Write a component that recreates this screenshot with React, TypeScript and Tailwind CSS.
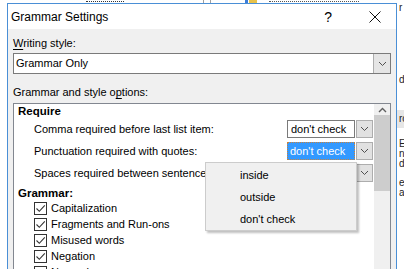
import React from "react";

const FONT = "font-[family-name:'Liberation_Sans',Arial,sans-serif]";

function ChevronDown() {
  return (
    <svg width="9" height="6" viewBox="0 0 9 6" className="block">
      <path d="M1 1 L4.5 4.5 L8 1" fill="none" stroke="#505050" strokeWidth="1" />
    </svg>
  );
}

function Check() {
  return (
    <svg width="11" height="11" viewBox="0 0 11 11" className="block">
      <path d="M1.5 5.5 L4.3 8.3 L9.8 2.3" fill="none" stroke="#333" strokeWidth="1.1" />
    </svg>
  );
}

function Dropdown({ value, focused }: { value: string; focused?: boolean }) {
  return (
    <div className="flex h-[18px] w-[86px] shrink-0">
      {focused ? (
        <div className="flex-1 bg-[#3399ff] border border-dotted border-[#c8823c] flex items-center pl-[2px] text-white leading-none">
          {value}
        </div>
      ) : (
        <div className="flex-1 bg-white border border-[#7a7a7a] flex items-center pl-[3px] text-black leading-none">
          {value}
        </div>
      )}
      <div className="w-[17px] ml-px bg-[#e1e1e1] border border-[#adadad] flex items-center justify-center">
        <ChevronDown />
      </div>
    </div>
  );
}

function SettingRow({ label, value, focused }: { label: string; value: string; focused?: boolean }) {
  return (
    <div className="h-[22px] flex items-center pl-[20px] pr-px">
      <span className="flex-1 min-w-0 overflow-hidden whitespace-nowrap">{label}</span>
      <Dropdown value={value} focused={focused} />
    </div>
  );
}

function CheckRow({ label }: { label: string }) {
  return (
    <div className="h-[16px] shrink-0 flex items-center pl-[20px] gap-[4px]">
      <div className="w-[13px] h-[13px] border border-[#333] bg-white flex items-center justify-center">
        <Check />
      </div>
      <span className="whitespace-nowrap">{label}</span>
    </div>
  );
}

export default function App() {
  return (
    <div className={`relative w-[404px] h-[269px] overflow-hidden bg-white text-[11px] text-black ${FONT}`}>
      {/* window behind the dialog */}
      <div className="h-[3px] flex items-start overflow-hidden bg-white">
        <div className="ml-[86px] w-[38px] h-[2px] border-b border-dotted border-[#333]" />
        <div className="ml-[79px] w-px h-[3px] bg-[#a0a0a0]" />
        <div className="ml-[6px] w-px h-[3px] bg-[#a0a0a0]" />
        <div className="ml-[34px] w-[3px] h-[3px] bg-[#3b7dd8]" />
        <div className="ml-px w-[8px] h-[3px] bg-[#e8c24a]" />
        <div className="ml-[12px] w-[90px] h-[2px] border-b border-dotted border-[#555]" />
      </div>

      <div className="flex h-[266px]">
        <div className="w-[7px] shrink-0 bg-white" />

        {/* Dialog */}
        <div className="relative w-[390px] shrink-0 border-x border-t border-[#4a8fd6] flex flex-col overflow-hidden">
          {/* Title bar */}
          <div className="h-[25px] shrink-0 bg-white flex items-center pl-[3px]">
            <span className="text-[12px] leading-none flex-1 whitespace-nowrap">Grammar Settings</span>
            <span className="text-[14px] leading-none mr-[37px] pt-px">?</span>
            <div className="mr-[15px]">
              <svg width="12" height="12" viewBox="0 0 12 12" className="block">
                <path d="M0.5 0.5 L11.5 11.5 M11.5 0.5 L0.5 11.5" stroke="#111" strokeWidth="1" />
              </svg>
            </div>
          </div>

          {/* Body */}
          <div className="flex-1 min-h-0 overflow-hidden bg-[#f0f0f0] pl-[5px] pr-[5px] pt-[7px]">
            <div className="h-[15px] leading-[15px]">
              <span className="underline underline-offset-2">W</span>riting style:
            </div>
            <div className="mt-[2px] h-[21px] border border-[#7a7a7a] bg-white flex">
              <div className="flex-1 flex items-center pl-[2px]">Grammar Only</div>
              <div className="w-[17px] bg-[#e5e5e5] border-l border-[#adadad] flex items-center justify-center">
                <ChevronDown />
              </div>
            </div>

            <div className="mt-[11px] h-[15px] leading-[15px]">
              Grammar and style o<span className="underline underline-offset-2">p</span>tions:
            </div>

            {/* List box */}
            <div className="mt-[3px] h-[200px] border border-[#828790] bg-white flex">
              <div className="flex-1 min-w-0 flex flex-col">
                <div className="h-[14px] shrink-0 leading-[14px] pl-[4px] font-bold text-[11.5px]">Require</div>
                <SettingRow label="Comma required before last list item:" value="don't check" />
                <SettingRow label="Punctuation required with quotes:" value="don't check" focused />
                <SettingRow label="Spaces required between sentences:" value="don't check" />
                <div className="mt-[2px] h-[14px] shrink-0 leading-[14px] pl-[4px] font-bold text-[11.5px]">Grammar:</div>
                <CheckRow label="Capitalization" />
                <CheckRow label="Fragments and Run-ons" />
                <CheckRow label="Misused words" />
                <CheckRow label="Negation" />
                <CheckRow label="Noun phrases" />
              </div>

              {/* Scrollbar */}
              <div className="w-[16px] shrink-0 bg-[#f0f0f0] flex flex-col">
                <div className="h-[11px] flex items-center justify-center">
                  <svg width="9" height="6" viewBox="0 0 9 6" className="block">
                    <path d="M1 5 L4.5 1.5 L8 5" fill="none" stroke="#606060" strokeWidth="1.4" />
                  </svg>
                </div>
                <div className="h-[76px] bg-[#cdcdcd]" />
              </div>
            </div>
          </div>

          {/* Open dropdown list */}
          <div className="absolute left-[197px] top-[158px] w-[152px] bg-[#f0f0f0] border border-[#cccccc] shadow-[2px_2px_2px_rgba(0,0,0,0.25)] pt-px">
            {["inside", "outside", "don't check"].map((o) => (
              <div key={o} className="h-[22px] flex items-center pl-[34px]">
                {o}
              </div>
            ))}
          </div>
        </div>

        {/* window behind, right edge */}
        <div className="w-[7px] shrink-0 bg-white flex flex-col overflow-hidden pl-[2px] text-[10px] leading-[10px] text-[#222]">
          <div className="h-[10px] whitespace-nowrap">r</div>
          <div className="h-[62px]" />
          <div className="h-[10px] whitespace-nowrap">dl</div>
          <div className="h-[25px]" />
          <div className="h-[18px] -ml-[2px] pl-[2px] bg-[#e6e6e6] flex items-center whitespace-nowrap">ro</div>
          <div className="h-[11px]" />
          <div className="h-[10px] whitespace-nowrap">E</div>
          <div className="h-[10px] whitespace-nowrap">n</div>
          <div className="h-[10px] whitespace-nowrap">dr</div>
          <div className="h-[9px]" />
          <div className="h-[10px] whitespace-nowrap">e</div>
          <div className="h-[10px] whitespace-nowrap">ar</div>
        </div>
      </div>
    </div>
  );
}
